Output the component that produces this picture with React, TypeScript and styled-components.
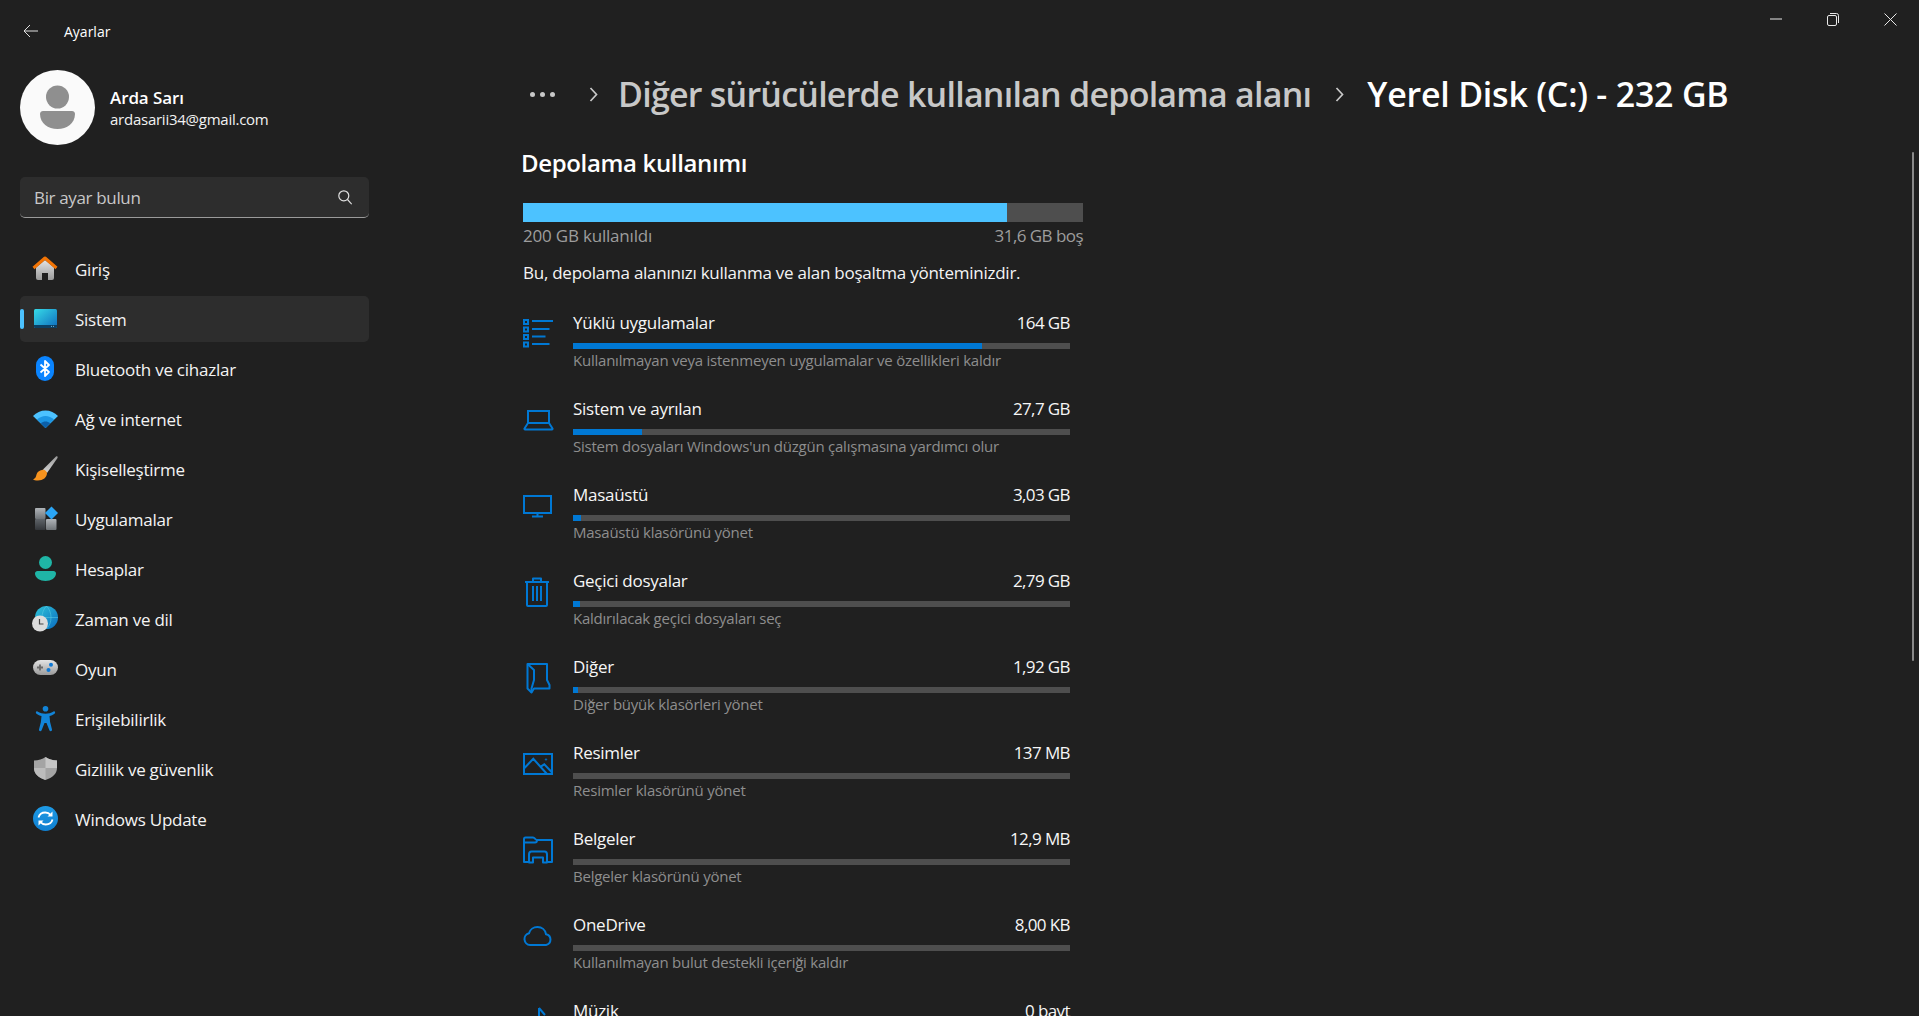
import React, { FC, ReactNode } from 'react';
import styled, { createGlobalStyle } from 'styled-components';

const GlobalStyle = createGlobalStyle`
  html, body {
    margin: 0;
    padding: 0;
    height: 100%;
    background: #202020;
    overflow: hidden;
  }
  * { box-sizing: border-box; }
`;

const Page = styled.div`
  display: grid;
  grid-template-columns: 393px 1fr;
  width: 1919px;
  height: 1016px;
  overflow: hidden;
  background: #202020;
  color: #fff;
  font-family: 'Open Sans', 'Noto Sans', sans-serif;
`;

// Sidebar
const Sidebar = styled.aside`
  display: flex;
  flex-direction: column;
  padding-left: 20px;
  & > * {
    flex: none;
  }
`;

const TitleRow = styled.div`
  display: flex;
  align-items: center;
  height: 62px;
  gap: 26px;
  padding-left: 3px;
  font-size: 14px;
`;

const Profile = styled.div`
  display: flex;
  align-items: center;
  gap: 15px;
  margin-top: 8px;
`;

const ProfileName = styled.div`
  font-size: 17px;
  font-weight: 600;
  line-height: 22px;
  letter-spacing: -0.1px;
`;

const ProfileMail = styled.div`
  font-size: 15px;
  line-height: 20px;
  letter-spacing: -0.25px;
  color: #f2f2f2;
`;

const SearchBox = styled.div`
  display: flex;
  align-items: center;
  justify-content: space-between;
  width: 349px;
  height: 41px;
  margin-top: 32px;
  padding: 0 17px 0 14px;
  background: #2d2d2d;
  border-radius: 5px;
  border-bottom: 1px solid #9a9a9a;
  color: #c8c8c8;
  font-size: 17px;
  letter-spacing: -0.35px;
`;

const Nav = styled.nav`
  display: flex;
  flex-direction: column;
  gap: 4px;
  margin-top: 28px;
  width: 349px;
`;

const NavRow = styled.div<{ $active?: boolean }>`
  position: relative;
  display: flex;
  align-items: center;
  gap: 17px;
  height: 46px;
  padding-left: 12px;
  border-radius: 5px;
  font-size: 17px;
  letter-spacing: -0.25px;
  color: #f4f4f4;
  background: ${(p) => (p.$active ? '#2d2d2d' : 'transparent')};
`;

const ActiveMark = styled.span`
  position: absolute;
  left: 0;
  top: 13px;
  width: 4px;
  height: 20px;
  border-radius: 2px;
  background: #4cc2ff;
`;

// Main column
const Main = styled.main`
  position: relative;
  display: flex;
  flex-direction: column;
  padding-left: 130px;
  overflow: hidden;
  & > * {
    flex: none;
  }
`;

const WindowControls = styled.div`
  display: flex;
  justify-content: flex-end;
  height: 38px;
  margin-right: 0.5px;
`;

const WindowButton = styled.div`
  display: flex;
  align-items: center;
  justify-content: center;
  width: 57px;
  height: 38px;
`;

const Breadcrumb = styled.div`
  display: flex;
  align-items: center;
  height: 50px;
  margin-top: 31px;
  padding-left: 7px;
  font-size: 34px;
  font-weight: 600;
  white-space: nowrap;
`;

const Crumb = styled.span<{ $current?: boolean }>`
  color: ${(p) => (p.$current ? '#ffffff' : '#c8c8c8')};
  letter-spacing: ${(p) => (p.$current ? '-0.23px' : '-0.76px')};
`;

const CrumbSeparator = styled.span<{ $first?: boolean }>`
  display: flex;
  align-items: center;
  justify-content: center;
  width: ${(p) => (p.$first ? '58px' : '56px')};
  padding-left: ${(p) => (p.$first ? '8px' : '0')};
`;

const Dots = styled.span`
  display: flex;
  gap: 5px;
  width: 30px;
`;

const Dot = styled.i`
  width: 5px;
  height: 5px;
  border-radius: 50%;
  background: #c8c8c8;
`;

const Heading = styled.h2`
  margin: 28px 0 0 -2px;
  font-size: 24px;
  font-weight: 600;
  line-height: 32px;
  letter-spacing: -0.35px;
  color: #fff;
`;

const Usage = styled.div`
  width: 560px;
  margin-top: 24px;
`;

const UsageTrack = styled.div`
  height: 19px;
  background: #4e4e4e;
`;

const UsageFill = styled.div`
  height: 100%;
  background: #4cc2ff;
`;

const UsageLabels = styled.div`
  display: flex;
  justify-content: space-between;
  margin-top: 4px;
  font-size: 17px;
  line-height: 20px;
  letter-spacing: -0.2px;
  color: #9d9d9d;
`;

const UsageFree = styled.span`
  letter-spacing: -0.55px;
`;

const Description = styled.p`
  margin: 17px 0 0;
  font-size: 17px;
  line-height: 20px;
  letter-spacing: -0.25px;
  color: #f4f4f4;
`;

const List = styled.div`
  display: flex;
  flex-direction: column;
  width: 547px;
  margin-top: 27px;
`;

const Row = styled.div`
  display: grid;
  grid-template-columns: 50px 1fr;
  height: 86px;
  flex: none;
`;

const RowIcon = styled.div`
  padding-top: 8px;
`;

const RowBody = styled.div`
  display: flex;
  flex-direction: column;
`;

const RowTop = styled.div`
  display: flex;
  justify-content: space-between;
  height: 24px;
  font-size: 17px;
  line-height: 26px;
  letter-spacing: -0.27px;
  color: #f6f6f6;
`;

const RowSize = styled.span`
  letter-spacing: -0.6px;
`;

const Meter = styled.div`
  height: 6px;
  margin-top: 9px;
  background: #4e4e4e;
`;

const MeterFill = styled.div`
  height: 100%;
  background: #0078d4;
`;

const RowSub = styled.div`
  margin-top: 1px;
  font-size: 15px;
  line-height: 20px;
  letter-spacing: -0.23px;
  color: #8e8e8e;
`;

const Scrollbar = styled.div`
  position: absolute;
  top: 152px;
  right: 5px;
  width: 2px;
  height: 509px;
  border-radius: 1px;
  background: #8a8a8a;
`;

// Icons
const Glyph: FC<{ size?: number; children: ReactNode }> = ({ size = 26, children }) => (
  <svg width={size} height={size} viewBox={`0 0 ${size} ${size}`} style={{ flex: 'none', overflow: 'visible' }}>
    {children}
  </svg>
);

const SharedDefs = () => (
  <svg width="0" height="0" style={{ position: 'absolute' }}>
    <defs>
      <linearGradient id="screen" x1="0" y1="0" x2="1" y2="1">
        <stop offset="0" stopColor="#36dbe8" />
        <stop offset="1" stopColor="#0f6cbd" />
      </linearGradient>
      <linearGradient id="silver" x1="0" y1="0" x2="0" y2="1">
        <stop offset="0" stopColor="#e4e4e4" />
        <stop offset="1" stopColor="#9a9a9a" />
      </linearGradient>
      <linearGradient id="brushHandle" x1="0" y1="0" x2="0" y2="1">
        <stop offset="0" stopColor="#9a9a9a" />
        <stop offset="1" stopColor="#d4d4d4" />
      </linearGradient>
      <linearGradient id="appDark" x1="0" y1="0" x2="0" y2="1">
        <stop offset="0" stopColor="#5f6469" />
        <stop offset="1" stopColor="#33363a" />
      </linearGradient>
      <linearGradient id="appLight" x1="0" y1="0" x2="0" y2="1">
        <stop offset="0" stopColor="#b0b4b8" />
        <stop offset="1" stopColor="#6f7478" />
      </linearGradient>
      <linearGradient id="globe" x1="0" y1="0" x2="1" y2="1">
        <stop offset="0" stopColor="#2fc4d8" />
        <stop offset="1" stopColor="#0a6cc0" />
      </linearGradient>
      <linearGradient id="update" x1="0" y1="0" x2="0" y2="1">
        <stop offset="0" stopColor="#1e9be6" />
        <stop offset="1" stopColor="#0f7fd0" />
      </linearGradient>
    </defs>
  </svg>
);

const navIcons: Record<string, ReactNode> = {
  home: (
    <>
      <path d="M4 11.5 13 4l9 7.5V22a2 2 0 0 1-2 2h-4v-7h-6v7H6a2 2 0 0 1-2-2z" fill="url(#silver)" />
      <path d="M1.5 12 13 2l11.5 10" fill="none" stroke="#f27405" strokeWidth="3" strokeLinejoin="round" />
    </>
  ),
  system: (
    <>
      <rect x="2" y="3" width="23" height="19" rx="1.5" fill="url(#screen)" />
      <path d="M2 19h23v1.5a1.5 1.5 0 0 1-1.5 1.5h-20A1.5 1.5 0 0 1 2 20.5z" fill="#0c3f63" />
      <path d="M19 20.4h1M21 20.4h1" stroke="#8fd4ee" strokeWidth="0.8" />
    </>
  ),
  bluetooth: (
    <>
      <rect x="4" y="0" width="18" height="25" rx="9" fill="#0a84ff" />
      <path d="M8.5 8.5 17 16l-4 4V5l4 4-8.5 7.5" fill="none" stroke="#fff" strokeWidth="1.8" strokeLinejoin="round" />
    </>
  ),
  wifi: (
    <>
      <path d="M1 10C7.500 2.500 19.500 2.500 26 10l-12.500 12z" fill="#4cc2ff" />
      <path d="M5 13.500c5-4.800 12-4.800 17 0l-8.500 8.500z" fill="#1d96e4" />
      <path d="M8.800 17.200c2.800-2.300 6.600-2.300 9.400 0l-4.700 4.800z" fill="#0c5fa8" />
    </>
  ),
  brush: (
    <>
      <path d="M24 0.500c1.200-.5 2 .3 1.500 1.500L15 17l-4-3.500z" fill="url(#brushHandle)" />
      <path d="M10 14c2-1 4.500.5 5 3 0 4.500-4 7.500-9 7.500-2.500 0-4.500-.5-5-1 2.500-1 3-3 3.500-5 .5-2.500 3-4 5.500-4.500z" fill="#f7931e" />
    </>
  ),
  apps: (
    <>
      <rect x="3" y="2" width="10.500" height="11" rx="1" fill="url(#appLight)" />
      <rect x="3" y="13" width="10.500" height="11" rx="1" fill="url(#appDark)" />
      <rect x="14" y="13" width="10.500" height="11" rx="1" fill="url(#appLight)" />
      <path d="M19.500 0.500 26 7l-6.500 6.500L13 7z" fill="#2aa5f5" />
    </>
  ),
  person: (
    <>
      <circle cx="13.500" cy="6.500" r="6.500" fill="#1fb5a6" />
      <path d="M3 17.500c0-1.400 1.100-2.500 2.500-2.500h16c1.400 0 2.500 1.100 2.500 2.500 0 4.500-5 7.500-10.500 7.500S3 22 3 17.500z" fill="#1fb5a6" />
    </>
  ),
  globe: (
    <>
      <circle cx="14.500" cy="11.500" r="11.500" fill="url(#globe)" />
      <path d="M3 11.500h23M14.500 0c-6 6-6 17 0 23M14.500 0c6 6 6 17 0 23" fill="none" stroke="#5fd0e6" strokeWidth="0.7" opacity="0.7" />
      <circle cx="8" cy="17.500" r="8" fill="#dcdcdc" />
      <path d="M7.500 13v5h4" fill="none" stroke="#444" strokeWidth="1.200" />
    </>
  ),
  game: (
    <>
      <rect x="1" y="4" width="25" height="15" rx="7.500" fill="url(#silver)" />
      <path d="M8 8.500v6M5 11.500h6" stroke="#6a6a6a" strokeWidth="1.800" />
      <circle cx="19" cy="8.800" r="2" fill="#0f78d4" />
      <circle cx="16.500" cy="14" r="2" fill="#0f78d4" />
    </>
  ),
  access: (
    <>
      <circle cx="13.500" cy="2.800" r="2.800" fill="#1284d8" />
      <path d="M5.500 5.500c5 3 11 3 16 0 1.500-.7 2.300 1.300 1 2.300-1.500 1-3.500 1.900-5 2.300l.6 5.900 1.900 7.600c.3 1.700-1.900 2.200-2.500.8L14.500 17h-2L9.500 24.400c-.6 1.400-2.800.9-2.500-.8l1.900-7.600.6-5.900c-1.500-.4-3.500-1.300-5-2.300-1.300-1-.5-3 1-2.300z" fill="#1284d8" />
    </>
  ),
  shield: (
    <>
      <path d="M13.500 1c3 2.300 7 3.400 11.500 3.600V12c0 5.500-4.500 9.800-11.500 12C6.500 21.800 2 17.500 2 12V4.600C6.500 4.400 10.500 3.300 13.500 1z" fill="#a4a4a4" />
      <path d="M13.500 1c3 2.300 7 3.400 11.500 3.600V12H13.500z" fill="#c6c6c6" />
      <path d="M13.500 12H2c0 5.500 4.500 9.800 11.500 12z" fill="#bcbcbc" />
    </>
  ),
  update: (
    <>
      <circle cx="13.500" cy="12.500" r="12.500" fill="url(#update)" />
      <path d="M6.500 11.500c.8-3.200 3.600-5 6.800-5 2.300 0 4 .9 5.500 2.600M20.500 13.500c-.8 3.200-3.600 5-6.800 5-2.300 0-4-.9-5.500-2.600" fill="none" stroke="#fff" strokeWidth="1.800" />
      <path d="M20.500 5.500v5h-5zM6.500 19.500v-5h5z" fill="#fff" />
    </>
  ),
};

const blue = { fill: 'none', stroke: '#0078d4', strokeWidth: 2 } as const;

const rowIcons: Record<string, ReactNode> = {
  list: (
    <g {...blue}>
      <path d="M1 2h4v4H1zM1 9.500h4v4H1zM1 17h4v4H1zM1 24.500h4v4H1z" />
      <path d="M9 3h21M9 11h17.500M9 18.500h13.500M9 26h17.500" />
    </g>
  ),
  laptop: (
    <g {...blue}>
      <path d="M5 19V7h21v12" />
      <path d="M5 19h21l3.500 5.500a.7.7 0 0 1-.6 1H2.100a.7.7 0 0 1-.6-1z" strokeLinejoin="round" />
    </g>
  ),
  monitor: (
    <g {...blue}>
      <rect x="1" y="6" width="27" height="17" />
      <path d="M14.500 23v3M9 26.500h11" />
    </g>
  ),
  trash: (
    <g {...blue} strokeLinejoin="round">
      <path d="M2 6h24M10 6V2.500h8V6" />
      <path d="M4 6v23a1 1 0 0 0 1 1h18a1 1 0 0 0 1-1V6" />
      <path d="M10 10v15M14 10v15M18 10v15" />
    </g>
  ),
  doc: (
    <g {...blue} strokeLinejoin="round">
      <path d="M4.500 2H24v16l2.500 5v3.500H11l-2.500 4-4-4z" />
      <path d="M4.500 2 11 8v10l-2.500 8.500v4" />
    </g>
  ),
  image: (
    <g {...blue}>
      <rect x="1" y="6" width="28" height="20" />
      <path d="M1 20.500 10.300 10.800 24 26M17.700 18.700l3.600-2.400 8 8.400" />
      <circle cx="23" cy="11.500" r="0.700" strokeWidth="1" />
    </g>
  ),
  folder: (
    <g {...blue} strokeLinejoin="round">
      <path d="M5.500 28H1V5a1.500 1.500 0 0 1 1.500-1.500H10c1.800 0 2.500 2.500 4 2.500h15v22h-4" />
      <path d="M1 8.500h11c1 0 2-1 2-2.500" />
      <path d="M6 28.500v-8c0-1.500 1-3 2.500-3h13c1.500 0 2.500 1.500 2.500 3v8h-4v-5H10v5z" />
    </g>
  ),
  cloud: (
    <g {...blue}>
      <path d="M7 25a6 6 0 0 1-1-11.800C7 9.500 10.500 7 14.500 7c4.300 0 7.800 3 8.500 7.200a5.500 5.500 0 0 1 0 10.800z" />
    </g>
  ),
  music: (
    <g {...blue}>
      <path d="M16 2v30M16 2l6 7" />
    </g>
  ),
};

const navItems = [
  { icon: 'home', label: 'Giriş' },
  { icon: 'system', label: 'Sistem', active: true },
  { icon: 'bluetooth', label: 'Bluetooth ve cihazlar' },
  { icon: 'wifi', label: 'Ağ ve internet' },
  { icon: 'brush', label: 'Kişiselleştirme' },
  { icon: 'apps', label: 'Uygulamalar' },
  { icon: 'person', label: 'Hesaplar' },
  { icon: 'globe', label: 'Zaman ve dil' },
  { icon: 'game', label: 'Oyun' },
  { icon: 'access', label: 'Erişilebilirlik' },
  { icon: 'shield', label: 'Gizlilik ve güvenlik' },
  { icon: 'update', label: 'Windows Update' },
];

const storageItems = [
  { icon: 'list', title: 'Yüklü uygulamalar', size: '164 GB', used: 409, sub: 'Kullanılmayan veya istenmeyen uygulamalar ve özellikleri kaldır' },
  { icon: 'laptop', title: 'Sistem ve ayrılan', size: '27,7 GB', used: 69, sub: "Sistem dosyaları Windows'un düzgün çalışmasına yardımcı olur" },
  { icon: 'monitor', title: 'Masaüstü', size: '3,03 GB', used: 8, sub: 'Masaüstü klasörünü yönet' },
  { icon: 'trash', title: 'Geçici dosyalar', size: '2,79 GB', used: 7, sub: 'Kaldırılacak geçici dosyaları seç' },
  { icon: 'doc', title: 'Diğer', size: '1,92 GB', used: 5, sub: 'Diğer büyük klasörleri yönet' },
  { icon: 'image', title: 'Resimler', size: '137 MB', used: 0, sub: 'Resimler klasörünü yönet' },
  { icon: 'folder', title: 'Belgeler', size: '12,9 MB', used: 0, sub: 'Belgeler klasörünü yönet' },
  { icon: 'cloud', title: 'OneDrive', size: '8,00 KB', used: 0, sub: 'Kullanılmayan bulut destekli içeriği kaldır' },
  { icon: 'music', title: 'Müzik', size: '0 bayt', used: 0, sub: 'Müzik klasörünü yönet' },
];

const Chevron = () => (
  <svg width="9" height="15" viewBox="0 0 9 15">
    <path d="M1.500 1 7.500 7.500l-6 6.500" fill="none" stroke="#c8c8c8" strokeWidth="1.700" />
  </svg>
);

const App: FC = () => (
  <Page>
    <GlobalStyle />
    <SharedDefs />
    <Sidebar>
      <TitleRow>
        <svg width="15" height="14" viewBox="0 0 15 14">
          <path d="M7 1 1 7l6 6M1 7h14" fill="none" stroke="#e0e0e0" strokeWidth="1" />
        </svg>
        Ayarlar
      </TitleRow>
      <Profile>
        <svg width="75" height="75" viewBox="0 0 75 75">
          <circle cx="37.500" cy="37.500" r="37.500" fill="#fafafa" />
          <circle cx="37.500" cy="27" r="11.500" fill="#8f8f8f" />
          <path d="M20 44c0-2 1.500-3 3-3h29c1.500 0 3 1 3 3 0 9-8 15-17.500 15S20 53 20 44z" fill="#8f8f8f" />
        </svg>
        <div>
          <ProfileName>Arda Sarı</ProfileName>
          <ProfileMail>ardasarii34@gmail.com</ProfileMail>
        </div>
      </Profile>
      <SearchBox>
        Bir ayar bulun
        <svg width="14" height="15" viewBox="0 0 14 15">
          <circle cx="5.800" cy="5.800" r="5" fill="none" stroke="#e0e0e0" strokeWidth="1.200" />
          <path d="m9.500 9.500 4.200 4.700" fill="none" stroke="#e0e0e0" strokeWidth="1.200" />
        </svg>
      </SearchBox>
      <Nav>
        {navItems.map((item) => (
          <NavRow key={item.label} $active={item.active}>
            {item.active && <ActiveMark />}
            <Glyph>{navIcons[item.icon]}</Glyph>
            {item.label}
          </NavRow>
        ))}
      </Nav>
    </Sidebar>
    <Main>
      <WindowControls>
        <WindowButton>
          <svg width="12" height="2" viewBox="0 0 12 2">
            <path d="M0 1h12" stroke="#e8e8e8" strokeWidth="1" />
          </svg>
        </WindowButton>
        <WindowButton>
          <svg width="12" height="13" viewBox="0 0 12 13">
            <rect x="0.500" y="2.500" width="9" height="10" rx="1.500" fill="none" stroke="#e8e8e8" />
            <path d="M3 .5h6.500a2 2 0 0 1 2 2V10" fill="none" stroke="#e8e8e8" />
          </svg>
        </WindowButton>
        <WindowButton>
          <svg width="13" height="13" viewBox="0 0 13 13">
            <path d="m.5.5 12 12M12.500.5l-12 12" stroke="#e8e8e8" strokeWidth="1" />
          </svg>
        </WindowButton>
      </WindowControls>
      <Breadcrumb>
        <Dots>
          <Dot />
          <Dot />
          <Dot />
        </Dots>
        <CrumbSeparator $first>
          <Chevron />
        </CrumbSeparator>
        <Crumb>Diğer sürücülerde kullanılan depolama alanı</Crumb>
        <CrumbSeparator>
          <Chevron />
        </CrumbSeparator>
        <Crumb $current>Yerel Disk (C:) - 232 GB</Crumb>
      </Breadcrumb>
      <Heading>Depolama kullanımı</Heading>
      <Usage>
        <UsageTrack>
          <UsageFill style={{ width: '484px' }} />
        </UsageTrack>
        <UsageLabels>
          <span>200 GB kullanıldı</span>
          <UsageFree>31,6 GB boş</UsageFree>
        </UsageLabels>
      </Usage>
      <Description>Bu, depolama alanınızı kullanma ve alan boşaltma yönteminizdir.</Description>
      <List>
        {storageItems.map((item) => (
          <Row key={item.title}>
            <RowIcon>
              <Glyph size={30}>{rowIcons[item.icon]}</Glyph>
            </RowIcon>
            <RowBody>
              <RowTop>
                <span>{item.title}</span>
                <RowSize>{item.size}</RowSize>
              </RowTop>
              <Meter>
                <MeterFill style={{ width: `${item.used}px` }} />
              </Meter>
              <RowSub>{item.sub}</RowSub>
            </RowBody>
          </Row>
        ))}
      </List>
      <Scrollbar />
    </Main>
  </Page>
);

export default App;
